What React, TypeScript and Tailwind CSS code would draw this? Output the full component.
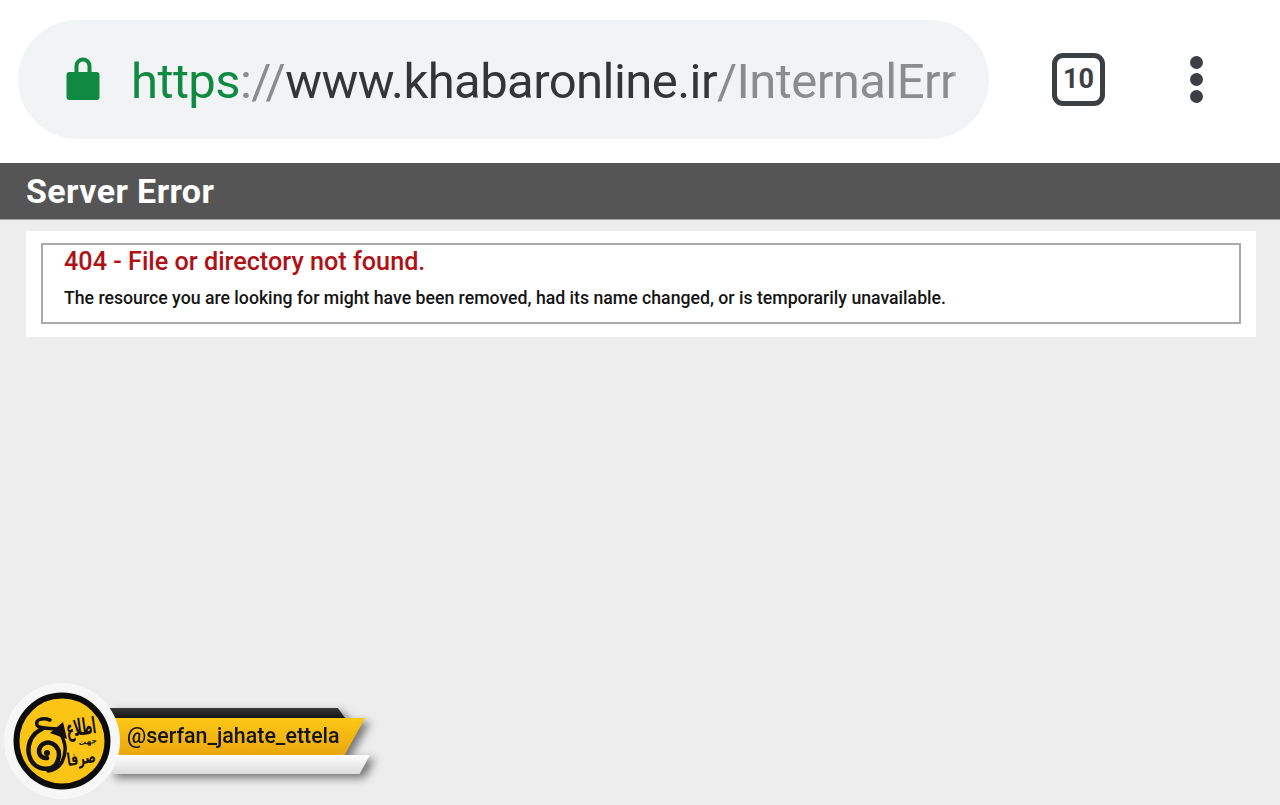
import React from "react";

const Logo: React.FC = () => {
  return (
    <svg width="116" height="116" viewBox="4 683 116 116" className="relative z-10 shrink-0">
      <circle cx="62" cy="741" r="58" fill="#f7f7f7" />
      <circle cx="62" cy="741" r="45.5" fill="#fcc414" stroke="#0c0c0c" strokeWidth="6" />
      {/* the big ain, wound into a spiral */}
      <g fill="none" stroke="#111" strokeLinecap="round">
        <path d="M50 720 C42 717 35 720 37 725 C39 729 50 728 56 729" strokeWidth="3.5" />
        <path d="M42 729 C30 734 26 748 30 758 C35 771 54 773 58 760 C62 748 52 739 43 744 C36 749 39 759 47 758" strokeWidth="4.5" />
        <path d="M56 729 C65 737 68 750 62 762 C59 767 54 770 48 771" strokeWidth="3.5" />
      </g>
      <circle cx="47" cy="753" r="3" fill="#111" />
      <path d="M50 733 L63 722 L67 739 Z" fill="#111" />
      {/* persian wordmark */}
      <g fontFamily="'DejaVu Sans', sans-serif" fill="#111" textAnchor="middle" fontWeight="700" direction="rtl">
        <text fontSize="11" transform="translate(82 735) rotate(-8) scale(1 2.1)">اطلاع</text>
        <text fontSize="7.5" transform="translate(88 744) rotate(-8)">جهت</text>
        <text fontSize="11" transform="translate(82 764) rotate(-8) scale(1 1.6)">صرفا</text>
      </g>
    </svg>
  );
};

const Badge: React.FC = () => {
  return (
    <div className="absolute left-[4px] bottom-[6px] flex items-center">
      <Logo />
      <div className="-ml-[10px] flex w-[260px] flex-col [filter:drop-shadow(5px_4px_4px_rgba(0,0,0,0.5))]">
        <div className="h-[10px] w-[235px] bg-gradient-to-b from-[#3a3a3a] to-[#151515] [clip-path:polygon(0_0,97%_0,100%_100%,0_100%)]" />
        <div className="flex h-[37px] w-[255px] items-center bg-gradient-to-b from-[#fdc816] to-[#eaa70e] pl-[17px] font-['Roboto',sans-serif] text-[21.4px] font-medium text-[#141414] [clip-path:polygon(0_0,100%_0,92%_100%,0_100%)]">
          @serfan_jahate_ettela
        </div>
        <div className="h-[19px] w-[260px] bg-gradient-to-b from-[#ffffff] to-[#dcdcdc] [clip-path:polygon(0_0,100%_0,96%_100%,0_100%)]" />
      </div>
    </div>
  );
};

export default function App() {
  return (
    <div className="relative flex h-[805px] w-[1280px] flex-col overflow-hidden bg-[#ededed] font-['Roboto',sans-serif]">
      {/* browser toolbar */}
      <div className="flex h-[163px] items-center bg-white pb-[4px] pl-[18px]">
        <div className="flex h-[119px] w-[971px] items-center rounded-[60px] bg-[#f1f3f4] pl-[48px]">
          <svg width="34" height="43" viewBox="0 0 34 43" className="mb-[3px] shrink-0">
            <path d="M10.5 19 V9 a6.5 6.5 0 0 1 13 0 V19" fill="none" stroke="#0f8a43" strokeWidth="4" />
            <rect x="0.5" y="15" width="33" height="28" rx="3" fill="#0f8a43" />
          </svg>
          <div className="relative ml-[31px] mt-[4px] w-[829px] overflow-hidden whitespace-nowrap text-[49px] leading-[60px] tracking-[-0.57px] text-[#8a8d90]">
            <span className="text-[#0f8a43]">https</span>
            <span>://</span>
            <span className="text-[#333639]">www.khabaronline.ir</span>
            <span>/InternalErr</span>
            <div className="absolute inset-y-0 right-0 w-[8px] bg-gradient-to-r from-transparent to-[#f1f3f4]" />
          </div>
        </div>
        <div className="ml-[63px] flex h-[53px] w-[53px] items-center justify-center rounded-[11px] border-[5px] border-[#3c4043] text-[27px] font-bold text-[#3c4043]">
          10
        </div>
        <div className="ml-[85px] flex flex-col gap-[4px]">
          <div className="h-[13px] w-[13px] rounded-full bg-[#3c4043]" />
          <div className="h-[13px] w-[13px] rounded-full bg-[#3c4043]" />
          <div className="h-[13px] w-[13px] rounded-full bg-[#3c4043]" />
        </div>
      </div>

      {/* error page header */}
      <div className="flex h-[57px] items-center border-b border-[#a5a5a5] bg-[#555555] pl-[26px] text-[34px] font-bold tracking-[0.4px] text-white">
        Server Error
      </div>

      {/* error content */}
      <div className="ml-[26px] mt-[11px] h-[106px] w-[1230px] bg-white px-[15px] pt-[12px]">
        <div className="h-[81px] w-[1200px] border-2 border-[#aaaaaa] pl-[21px]">
          <h2 className="mt-[2px] text-[25.2px] leading-[30px] font-medium text-[#b01116]">
            404 - File or directory not found.
          </h2>
          <h3 className="mt-[10px] text-[17.68px] leading-[22px] font-medium text-[#141414]">
            The resource you are looking for might have been removed, had its name changed, or is temporarily unavailable.
          </h3>
        </div>
      </div>

      <Badge />
    </div>
  );
}
